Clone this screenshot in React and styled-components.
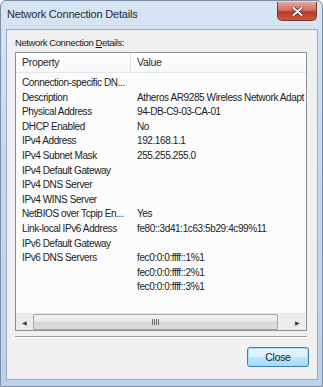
import React from "react";
import styled, { createGlobalStyle } from "styled-components";

const GlobalStyle = createGlobalStyle`
  html, body {
    margin: 0;
    padding: 0;
    background: #ffffff;
  }
  body {
    font-family: "Liberation Sans", Arial, sans-serif;
  }
`;

const Window = styled.div`
  width: 323px;
  height: 387px;
  box-sizing: border-box;
  border: 1px solid #7b8ea4;
  border-radius: 6px 6px 0 0;
  background: linear-gradient(180deg, #d7e5f3 0%, #c6d9ed 40%, #bcd2ea 100%);
  display: flex;
  flex-direction: column;
  overflow: hidden;
`;

const TitleBar = styled.div`
  height: 28px;
  display: flex;
  align-items: flex-start;
  justify-content: space-between;
  padding: 0 5px 0 6px;
`;

const Title = styled.span`
  font-size: 11px;
  letter-spacing: -0.2px;
  color: #1e2a38;
  margin-top: 7px;
`;

const CloseX = styled.div`
  width: 38px;
  height: 18px;
  margin-top: 1px;
  border: 1px solid #7a3b33;
  border-top: none;
  border-radius: 0 0 5px 5px;
  background: linear-gradient(180deg, #e6a89b 0%, #d2705e 45%, #b83b24 55%, #c9593f 100%);
  display: flex;
  align-items: center;
  justify-content: center;
`;

const Grip = styled.div`
  display: flex;
  gap: 1px;
  span {
    width: 1px;
    height: 6px;
    background: #6f6f6f;
  }
`;

const Client = styled.div`
  flex: 1;
  margin: 0 4px 6px 5px;
  border: 1px solid #98aec6;
  background: #f0f0f0;
  display: flex;
  flex-direction: column;
  padding: 6px 10px 10px 8px;
`;

const Label = styled.div`
  font-size: 9.5px;
  letter-spacing: -0.4px;
  color: #1b1b1b;
  height: 16px;
  line-height: 14px;
  u {
    text-decoration: underline;
  }
`;

const ListBox = styled.div`
  border: 1px solid #8c8f95;
  background: #fbfbfb;
  height: 279px;
  box-sizing: border-box;
  display: flex;
  flex-direction: column;
  overflow: hidden;
`;

const Header = styled.div`
  display: grid;
  grid-template-columns: 115px 1fr;
  height: 19px;
  border-bottom: 1px solid #e3e6ea;
  background: linear-gradient(180deg, #ffffff 0%, #f7f8fa 100%);
`;

const HeaderCell = styled.div`
  font-size: 10.5px;
  letter-spacing: -0.3px;
  color: #2a2a2a;
  padding-left: 6px;
  line-height: 19px;
  border-right: ${p => (p.divider ? "1px solid #e0e3e8" : "none")};
`;

const Rows = styled.div`
  flex: 1;
  padding-top: 3px;
  overflow: hidden;
`;

const Row = styled.div`
  display: grid;
  grid-template-columns: 115px 1fr;
  height: 14.6px;
  line-height: 14.6px;
  font-size: 10px;
  letter-spacing: -0.4px;
  color: #222;
  white-space: nowrap;
`;

const Cell = styled.div`
  padding-left: 6px;
  overflow: hidden;
`;

const ScrollBar = styled.div`
  height: 16px;
  display: flex;
  align-items: center;
  background: #ececec;
  border-top: 1px solid #e4e4e4;
`;

const Arrow = styled.div`
  width: 17px;
  height: 16px;
  display: flex;
  align-items: center;
  justify-content: center;
  font-size: 6px;
  color: #3d3d3d;
`;

const Thumb = styled.div`
  flex: 1;
  height: 14px;
  margin: 0 11px 0 0;
  border: 1px solid #a5a5a5;
  border-radius: 2px;
  background: linear-gradient(180deg, #f3f3f3 0%, #e6e6e6 50%, #d6d6d6 51%, #dcdcdc 100%);
  display: flex;
  align-items: center;
  justify-content: center;
`;

const Separator = styled.div`
  height: 0;
  border-top: 1px solid #a0a0a0;
  border-bottom: 1px solid #ffffff;
  margin: 5px 0 9px 0;
`;

const Footer = styled.div`
  display: flex;
  justify-content: flex-end;
`;

const Button = styled.button`
  width: 62px;
  height: 20px;
  margin-right: -2px;
  border: 1px solid #3c7fb1;
  border-radius: 3px;
  background: linear-gradient(180deg, #eaf6fd 0%, #d9f0fc 50%, #bee6fd 51%, #a7d9f5 100%);
  box-shadow: inset 0 0 0 1px #9fe0f7;
  font-family: "Liberation Sans", Arial, sans-serif;
  font-size: 10.5px;
  letter-spacing: -0.3px;
  color: #1a1a1a;
  padding: 0;
`;

const rows = [
  ["Connection-specific DN...", ""],
  ["Description", "Atheros AR9285 Wireless Network Adapt"],
  ["Physical Address", "94-DB-C9-03-CA-01"],
  ["DHCP Enabled", "No"],
  ["IPv4 Address", "192.168.1.1"],
  ["IPv4 Subnet Mask", "255.255.255.0"],
  ["IPv4 Default Gateway", ""],
  ["IPv4 DNS Server", ""],
  ["IPv4 WINS Server", ""],
  ["NetBIOS over Tcpip En...", "Yes"],
  ["Link-local IPv6 Address", "fe80::3d41:1c63:5b29:4c99%11"],
  ["IPv6 Default Gateway", ""],
  ["IPv6 DNS Servers", "fec0:0:0:ffff::1%1"],
  ["", "fec0:0:0:ffff::2%1"],
  ["", "fec0:0:0:ffff::3%1"],
];

export default function App() {
  return (
    <>
      <GlobalStyle />
      <Window>
        <TitleBar>
          <Title>Network Connection Details</Title>
          <CloseX>
            <svg width="11" height="9" viewBox="0 0 11 9">
              <path
                d="M1.5 1 L9.5 8 M9.5 1 L1.5 8"
                stroke="#5a1a10"
                strokeWidth="3.4"
                strokeLinecap="round"
              />
              <path
                d="M1.5 1 L9.5 8 M9.5 1 L1.5 8"
                stroke="#ffffff"
                strokeWidth="2"
                strokeLinecap="round"
              />
            </svg>
          </CloseX>
        </TitleBar>
        <Client>
          <Label>
            Network Connection <u>D</u>etails:
          </Label>
          <ListBox>
            <Header>
              <HeaderCell divider>Property</HeaderCell>
              <HeaderCell>Value</HeaderCell>
            </Header>
            <Rows>
              {rows.map(([k, v], i) => (
                <Row key={i}>
                  <Cell>{k}</Cell>
                  <Cell>{v}</Cell>
                </Row>
              ))}
            </Rows>
            <ScrollBar>
              <Arrow>◀</Arrow>
              <Thumb>
                <Grip>
                  <span />
                  <span />
                  <span />
                  <span />
                </Grip>
              </Thumb>
              <Arrow>▶</Arrow>
            </ScrollBar>
          </ListBox>
          <Separator />
          <Footer>
            <Button>Close</Button>
          </Footer>
        </Client>
      </Window>
    </>
  );
}
